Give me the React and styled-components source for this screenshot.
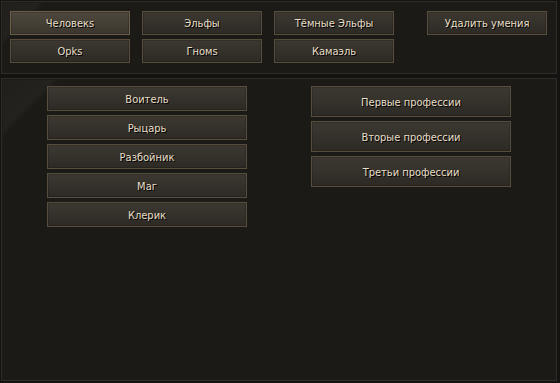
import React from "react";
import styled, { createGlobalStyle, css } from "styled-components";

const Global = createGlobalStyle`
  html, body { margin: 0; padding: 0; background: #141311; }
  body { width: 560px; height: 383px; overflow: hidden; }
  * { box-sizing: border-box; }
`;

const Page = styled.div`
  width: 560px;
  height: 383px;
  padding: 1px 3px 2px 1px;
  display: flex;
  flex-direction: column;
  gap: 4px;
  font-family: "DejaVu Sans Condensed", "DejaVu Sans", Tahoma, sans-serif;
  font-stretch: condensed;
`;

const Panel = styled.div`
  border: 1px solid #2f2c27;
  box-shadow: inset 0 0 0 1px #1d1c19;
  background:
    linear-gradient(135deg, rgba(255,255,255,0.025) 0%, rgba(255,255,255,0.035) 6%, rgba(255,255,255,0) 7%),
    #1b1a17;
`;

const TopPanel = styled(Panel)`
  height: 73px;
  padding: 9px 9px 0 8px;
  display: grid;
  grid-template-columns: 120px 120px 120px 1fr;
  grid-auto-rows: 25px;
  column-gap: 12px;
  row-gap: 3px;
`;

const BottomPanel = styled(Panel)`
  flex: 1;
  padding: 7px 0 0 45px;
  display: flex;
  gap: 64px;
  align-items: flex-start;
`;

const Column = styled.div`
  width: 200px;
  display: flex;
  flex-direction: column;
  gap: ${(p) => p.$gap}px;
`;

const Button = styled.div`
  height: ${(p) => p.$h || 25}px;
  width: ${(p) => (p.$w ? p.$w + "px" : "auto")};
  display: flex;
  align-items: center;
  justify-content: center;
  padding-top: 1px;
  border: 1px solid #574d3d;
  background: linear-gradient(180deg, #3c3831 0%, #34312b 55%, #2d2a25 100%);
  box-shadow: inset 0 0 0 1px rgba(0,0,0,0.15);
  color: #e8dfc6;
  font-size: 11px;
  text-shadow: 1px 1px 0 #000;
  white-space: nowrap;
  ${(p) => p.$end && css`grid-column: 4; justify-self: end;`}
  ${(p) =>
    p.$active &&
    css`
      border-color: #6b5e48;
      background: linear-gradient(180deg, #4d473c 0%, #443f35 55%, #3b362e 100%);
    `}
`;

const races = [
  ["Человекs", true],
  ["Эльфы"],
  ["Тёмные Эльфы"],
];
const races2 = ["Орks", "Гномs", "Камаэль"];
const classes = ["Воитель", "Рыцарь", "Разбойник", "Маг", "Клерик"];
const profs = ["Первые профессии", "Вторые профессии", "Третьи профессии"];

export default function App() {
  return (
    <>
      <Global />
      <Page>
        <TopPanel>
          {races.map(([r, a]) => (
            <Button key={r} $active={a} $h={24}>{r}</Button>
          ))}
          <Button $end $w={120} $h={24}>Удалить умения</Button>
          {races2.map((r) => (
            <Button key={r} $h={24}>{r}</Button>
          ))}
        </TopPanel>
        <BottomPanel>
          <Column $gap={4}>
            {classes.map((c) => (
              <Button key={c} $h={25}>{c}</Button>
            ))}
          </Column>
          <Column $gap={4}>
            {profs.map((c) => (
              <Button key={c} $h={31}>{c}</Button>
            ))}
          </Column>
        </BottomPanel>
      </Page>
    </>
  );
}
